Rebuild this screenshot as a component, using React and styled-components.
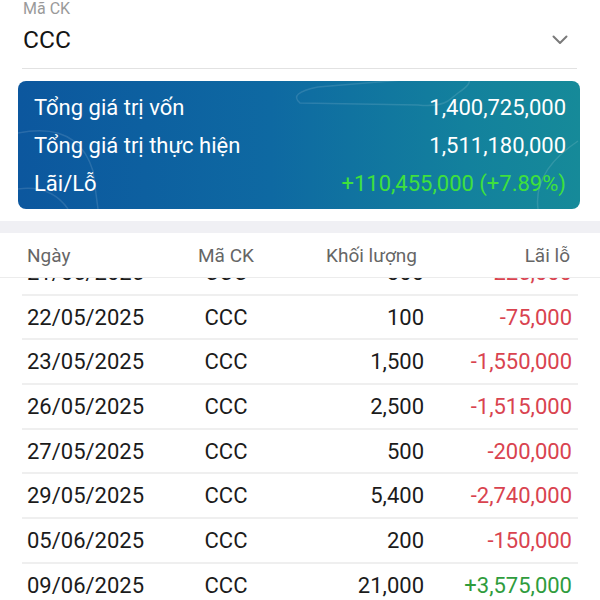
import React, { useLayoutEffect, useRef } from 'react';
import styled, { createGlobalStyle } from 'styled-components';

const GlobalStyle = createGlobalStyle`
  html, body, #root {
    margin: 0;
    padding: 0;
    height: 100%;
    overflow: hidden;
    background: #fff;
  }
  body {
    font-family: Roboto, "Noto Sans", "Liberation Sans", sans-serif;
  }
`;

const Page = styled.div`
  height: 100vh;
  display: flex;
  flex-direction: column;
  background: #fff;
`;

const Picker = styled.div`
  margin: 0 23px 0 22px;
  padding-bottom: 14px;
  border-bottom: 1px solid #e2e2e2;
`;

const PickerLabel = styled.div`
  font-size: 16px;
  line-height: 18px;
  color: #9a9a9a;
  padding-left: 1px;
`;

const PickerValue = styled.div`
  margin-top: 8px;
  display: flex;
  align-items: center;
  justify-content: space-between;
  font-size: 24.5px;
  line-height: 28px;
  color: #141414;
  padding-left: 1px;

  svg {
    margin-right: 9px;
  }
`;

const Summary = styled.div`
  position: relative;
  overflow: hidden;
  margin: 12px 20px 0 18px;
  padding: 8px 14px 6px 16px;
  border-radius: 8px;
  background: linear-gradient(90deg, #0c579e 0%, #0e69a2 45%, #13819d 80%, #168a99 100%);
  color: #fff;
`;

const Decor = styled.svg`
  position: absolute;
  inset: 0;
  width: 100%;
  height: 100%;
  pointer-events: none;
`;

const SummaryRow = styled.div`
  position: relative;
  display: flex;
  justify-content: space-between;
  font-size: 22px;
  line-height: 38px;
`;

const SummaryValue = styled.span`
  color: ${(p) => (p.$profit ? '#3fe03c' : '#fff')};
`;

const Band = styled.div`
  margin-top: 12px;
  height: 12px;
  background: #f0f0f4;
`;

const TableHead = styled.div`
  display: grid;
  grid-template-columns: 140px 118px 139px 148px;
  align-items: center;
  height: 44px;
  padding: 0 28px 0 27px;
  font-size: 19px;
  color: #666;
  border-bottom: 1px solid #ececec;
`;

const HeadCell = styled.div`
  text-align: ${(p) => p.$align || 'left'};
  padding-right: ${(p) => p.$pr || 0}px;
  white-space: nowrap;
`;

const List = styled.div`
  flex: 1;
  min-height: 0;
  overflow-y: auto;
  scrollbar-width: none;
  &::-webkit-scrollbar {
    display: none;
  }
`;

const Row = styled.div`
  display: grid;
  grid-template-columns: 140px 118px 139px 148px;
  align-items: center;
  box-sizing: border-box;
  height: 44.7px;
  margin: 0 22px;
  padding: 0 6px 0 5px;
  border-bottom: 2px solid #efefef;
  font-size: 22px;
  color: #1b1b1b;
`;

const Cell = styled.div`
  text-align: ${(p) => p.$align || 'left'};
  white-space: nowrap;
  color: ${(p) => (p.$tone === 'up' ? '#2f9c3d' : p.$tone === 'down' ? '#d9434f' : 'inherit')};
`;

const trades = [
  { date: '21/05/2025', code: 'CCC', qty: '300', pnl: '-225,000' },
  { date: '22/05/2025', code: 'CCC', qty: '100', pnl: '-75,000' },
  { date: '23/05/2025', code: 'CCC', qty: '1,500', pnl: '-1,550,000' },
  { date: '26/05/2025', code: 'CCC', qty: '2,500', pnl: '-1,515,000' },
  { date: '27/05/2025', code: 'CCC', qty: '500', pnl: '-200,000' },
  { date: '29/05/2025', code: 'CCC', qty: '5,400', pnl: '-2,740,000' },
  { date: '05/06/2025', code: 'CCC', qty: '200', pnl: '-150,000' },
  { date: '09/06/2025', code: 'CCC', qty: '21,000', pnl: '+3,575,000' },
  { date: '10/06/2025', code: 'CCC', qty: '800', pnl: '+420,000' },
];

const Chevron = () => (
  <svg width="16" height="10" viewBox="0 0 16 10" fill="none">
    <path d="M1.5 1.5 L8 8 L14.5 1.5" stroke="#7a7a7a" strokeWidth="2" strokeLinecap="round" strokeLinejoin="round" />
  </svg>
);

const CardDecor = () => (
  <Decor viewBox="0 0 562 128" preserveAspectRatio="none">
    <g fill="none" stroke="rgba(255,255,255,0.12)" strokeWidth="1.5">
      <path d="M282 22 Q270 12 300 6 L420 -4 Q470 -8 440 12 L430 20 Q420 26 400 24 Z" />
      <path d="M0 52 Q60 40 75 90 L80 128" />
      <path d="M-10 110 Q30 100 50 128" />
      <path d="M520 128 Q515 90 560 60" />
    </g>
  </Decor>
);

const App = () => {
  const listRef = useRef(null);

  useLayoutEffect(() => {
    if (listRef.current) listRef.current.scrollTop = 27;
  }, []);

  return (
    <Page>
      <GlobalStyle />
      <Picker>
        <PickerLabel>Mã CK</PickerLabel>
        <PickerValue>
          CCC
          <Chevron />
        </PickerValue>
      </Picker>

      <Summary>
        <CardDecor />
        <SummaryRow>
          <span>Tổng giá trị vốn</span>
          <SummaryValue>1,400,725,000</SummaryValue>
        </SummaryRow>
        <SummaryRow>
          <span>Tổng giá trị thực hiện</span>
          <SummaryValue>1,511,180,000</SummaryValue>
        </SummaryRow>
        <SummaryRow>
          <span>Lãi/Lỗ</span>
          <SummaryValue $profit>+110,455,000 (+7.89%)</SummaryValue>
        </SummaryRow>
      </Summary>

      <Band />

      <TableHead>
        <HeadCell>Ngày</HeadCell>
        <HeadCell $align="center">Mã CK</HeadCell>
        <HeadCell $align="right" $pr={7}>Khối lượng</HeadCell>
        <HeadCell $align="right" $pr={2}>Lãi lỗ</HeadCell>
      </TableHead>

      <List ref={listRef}>
        {trades.map((t, key) => (
          <Row key={key}>
            <Cell>{t.date}</Cell>
            <Cell $align="center">{t.code}</Cell>
            <Cell $align="right">{t.qty}</Cell>
            <Cell $align="right" $tone={t.pnl.startsWith('+') ? 'up' : 'down'}>{t.pnl}</Cell>
          </Row>
        ))}
      </List>
    </Page>
  );
};

export default App;
